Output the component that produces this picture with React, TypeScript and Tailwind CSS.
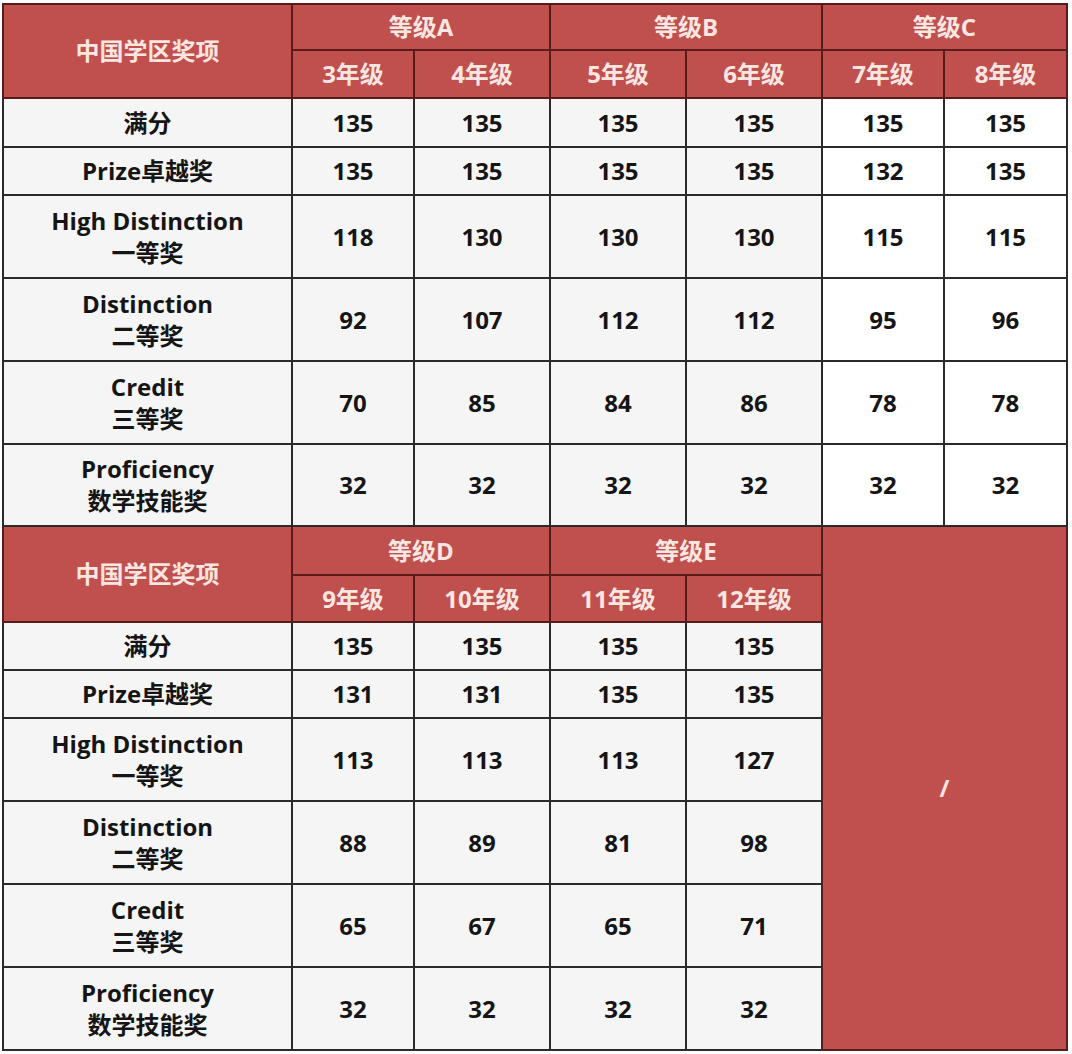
const font = "font-['Open_Sans','Noto_Sans_CJK_SC',sans-serif]";

const head = 'bg-[#c0504d] text-[#fbe6e2] border-2 border-[#5a1c1a] font-bold text-center align-middle text-[24px]';
const cell = 'border-2 border-[#2a2a2a] font-bold text-center align-middle text-[#151515]';

type Row = { label: string[]; vals: string[]; h: string };

const top: Row[] = [
  { label: ['满分'], vals: ['135', '135', '135', '135', '135', '135'], h: 'h-[49px]' },
  { label: ['Prize卓越奖'], vals: ['135', '135', '135', '135', '132', '135'], h: 'h-[48px]' },
  { label: ['High Distinction', '一等奖'], vals: ['118', '130', '130', '130', '115', '115'], h: 'h-[83px]' },
  { label: ['Distinction', '二等奖'], vals: ['92', '107', '112', '112', '95', '96'], h: 'h-[83px]' },
  { label: ['Credit', '三等奖'], vals: ['70', '85', '84', '86', '78', '78'], h: 'h-[83px]' },
  { label: ['Proficiency', '数学技能奖'], vals: ['32', '32', '32', '32', '32', '32'], h: 'h-[82px]' },
];

const bottom: Row[] = [
  { label: ['满分'], vals: ['135', '135', '135', '135'], h: 'h-[48px]' },
  { label: ['Prize卓越奖'], vals: ['131', '131', '135', '135'], h: 'h-[48px]' },
  { label: ['High Distinction', '一等奖'], vals: ['113', '113', '113', '127'], h: 'h-[83px]' },
  { label: ['Distinction', '二等奖'], vals: ['88', '89', '81', '98'], h: 'h-[83px]' },
  { label: ['Credit', '三等奖'], vals: ['65', '67', '65', '71'], h: 'h-[83px]' },
  { label: ['Proficiency', '数学技能奖'], vals: ['32', '32', '32', '32'], h: 'h-[83px]' },
];

function Label({ lines }: { lines: string[] }) {
  return (
    <td className={`${cell} bg-[#f5f5f5] text-[24px] leading-[32px]`}>
      {lines.map((l) => (
        <div key={l}>{l}</div>
      ))}
    </td>
  );
}

export default function App() {
  return (
    <div className={`bg-white w-[1072px] h-[1054px] pl-[2px] pt-[3px] ${font}`}>
      <table className="border-collapse table-fixed w-[1064px]">
        <colgroup>
          <col className="w-[289px]" />
          <col className="w-[122px]" />
          <col className="w-[136px]" />
          <col className="w-[136px]" />
          <col className="w-[136px]" />
          <col className="w-[122px]" />
          <col className="w-[123px]" />
        </colgroup>
        <tbody>
          <tr className="h-[46px]">
            <td rowSpan={2} className={head}>中国学区奖项</td>
            <td colSpan={2} className={head}>等级A</td>
            <td colSpan={2} className={head}>等级B</td>
            <td colSpan={2} className={head}>等级C</td>
          </tr>
          <tr className="h-[48px]">
            {['3年级', '4年级', '5年级', '6年级', '7年级', '8年级'].map((g) => (
              <td key={g} className={head}>{g}</td>
            ))}
          </tr>
          {top.map((r) => (
            <tr key={r.label.join()} className={r.h}>
              <Label lines={r.label} />
              {r.vals.map((v, i) => (
                <td key={i} className={`${cell} text-[24px] ${i >= 4 ? 'bg-white' : 'bg-[#f5f5f5]'}`}>{v}</td>
              ))}
            </tr>
          ))}
          <tr className="h-[49px]">
            <td rowSpan={2} className={head}>中国学区奖项</td>
            <td colSpan={2} className={head}>等级D</td>
            <td colSpan={2} className={head}>等级E</td>
            <td colSpan={2} rowSpan={8} className={head}>/</td>
          </tr>
          <tr className="h-[47px]">
            {['9年级', '10年级', '11年级', '12年级'].map((g) => (
              <td key={g} className={head}>{g}</td>
            ))}
          </tr>
          {bottom.map((r) => (
            <tr key={'b' + r.label.join()} className={r.h}>
              <Label lines={r.label} />
              {r.vals.map((v, i) => (
                <td key={i} className={`${cell} text-[24px] bg-[#f5f5f5]`}>{v}</td>
              ))}
            </tr>
          ))}
        </tbody>
      </table>
    </div>
  );
}
